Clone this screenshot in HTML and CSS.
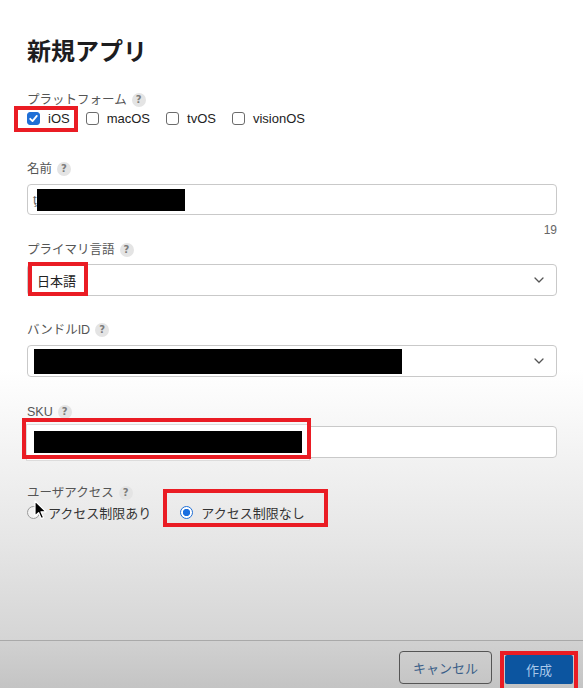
FILE: index.html
```html
<!DOCTYPE html>
<html>
<head>
    <title>新規アプリ</title>
    <link rel="stylesheet" href="styles.css">
</head>
<body>
    <div class="dialog">
        <div class="content">
            <h2 class="title">新規アプリ</h2>

            <!-- Platform -->
            <div class="label label-platform">プラットフォーム <span class="help">?</span></div>
            <div class="options">
                <span class="option"><span class="check checked"><svg viewBox="0 0 13 13" width="13" height="13"><path d="M3.2 6.8 L5.5 9.1 L9.8 3.9" fill="none" stroke="#fff" stroke-width="1.8" stroke-linecap="round" stroke-linejoin="round"/></svg></span>iOS</span>
                <span class="option"><span class="check"></span>macOS</span>
                <span class="option"><span class="check"></span>tvOS</span>
                <span class="option"><span class="check"></span>visionOS</span>
            </div>

            <!-- Name -->
            <div class="label label-name">名前 <span class="help">?</span></div>
            <div class="input input-name"><span class="ghost">ţ</span><span class="redact redact-name"></span></div>
            <div class="counter">19</div>

            <!-- Primary language -->
            <div class="label label-lang">プライマリ言語 <span class="help">?</span></div>
            <div class="input select select-lang">
                <span class="value">日本語</span>
                <svg class="chevron" viewBox="0 0 10 6" width="10" height="6"><path d="M1 1 L5 5 L9 1" fill="none" stroke="#555" stroke-width="1.3" stroke-linecap="round" stroke-linejoin="round"/></svg>
            </div>

            <!-- Bundle ID -->
            <div class="label label-bundle">バンドルID <span class="help">?</span></div>
            <div class="input select select-bundle">
                <span class="redact redact-bundle"></span>
                <svg class="chevron" viewBox="0 0 10 6" width="10" height="6"><path d="M1 1 L5 5 L9 1" fill="none" stroke="#555" stroke-width="1.3" stroke-linecap="round" stroke-linejoin="round"/></svg>
            </div>

            <!-- SKU -->
            <div class="label label-sku">SKU <span class="help">?</span></div>
            <div class="input input-sku"><span class="paste"><span class="redact redact-sku"></span></span></div>

            <!-- User access -->
            <div class="label label-access">ユーザアクセス <span class="help">?</span></div>
            <div class="options radios">
                <span class="option"><span class="radio"></span>アクセス制限あり</span>
                <span class="option option-gap"><span class="radio selected"></span>アクセス制限なし</span>
            </div>
        </div>

        <div class="footer">
            <button class="btn btn-cancel">キャンセル</button>
            <button class="btn btn-create">作成</button>
        </div>
    </div>

    <!-- annotation marks drawn over the screenshot -->
    <div class="mark mark-ios"></div>
    <div class="mark mark-lang"></div>
    <div class="mark mark-sku"></div>
    <div class="mark mark-open"></div>
    <div class="mark mark-create"></div>

    <svg class="cursor" viewBox="0 0 14 21" width="14" height="21"><path d="M1 1 L1 16 L4.6 12.6 L7.2 18.6 L9.6 17.6 L7 11.8 L12 11.8 Z" fill="#000" stroke="#fff" stroke-width="1.2" stroke-linejoin="round"/></svg>
</body>
</html>
```

FILE: styles.css
```css
body {
    margin: 0;
    width: 583px;
    height: 688px;
    overflow: hidden;
    position: relative;
    font-family: "Liberation Sans", "Noto Sans CJK JP", sans-serif;
    color: #222;
    background: linear-gradient(#ffffff 0, #ffffff 370px, #e6e6e6 540px, #d5d5d5 640px);
}
.dialog {
    height: 688px;
    display: flex;
    flex-direction: column;
}
.content {
    flex: 1;
    padding: 0 26px 0 27px;
}
.title {
    margin: 36px 0 0;
    font-size: 24px;
    line-height: 32px;
    font-weight: bold;
    color: #1d1d1f;
}
.label {
    display: flex;
    align-items: center;
    font-size: 12.5px;
    line-height: 18px;
    color: #555;
}
.help {
    display: inline-flex;
    align-items: center;
    justify-content: center;
    width: 14px;
    height: 14px;
    margin-left: 5px;
    border-radius: 50%;
    background-color: #e4e4e4;
    color: #7c7c7c;
    font-family: "DejaVu Sans", sans-serif;
    font-size: 10px;
    font-weight: bold;
    line-height: 14px;
}
.label-platform { margin-top: 23px; }
.label-name { margin-top: 33px; }
.label-lang { margin-top: 3px; }
.label-bundle { margin-top: 25px; }
.label-sku { margin-top: 26px; }
.label-access { margin-top: 26px; }

.options {
    display: flex;
    align-items: center;
    height: 18px;
    font-size: 13px;
    color: #222;
}
.option {
    display: flex;
    align-items: center;
    margin-right: 16px;
}
.check {
    width: 11px;
    height: 11px;
    margin-right: 8px;
    border: 1px solid #6b6b6b;
    border-radius: 3px;
    background: #fff;
    display: flex;
}
.check.checked {
    border-color: #1f6fd6;
    background: #1f6fd6;
}
.check svg {
    margin: -1px;
}
.radios {
    margin-top: 1px;
    color: #333;
}
.radio {
    width: 11px;
    height: 11px;
    margin-right: 8px;
    border: 1px solid #9a9a9a;
    border-radius: 50%;
    background: #f2f2f2;
}
.radio.selected {
    border-color: #1f6fd6;
    background: radial-gradient(circle, #1a6fe0 0, #1a6fe0 3.4px, #fff 3.9px);
}
.option-gap {
    margin-left: 13px;
}

.input {
    height: 29px;
    margin-top: 6px;
    border: 1px solid #c9c9c9;
    border-radius: 4px;
    background: #fff;
    display: flex;
    align-items: center;
    position: relative;
}
.input-name { margin-top: 6px; }
.select-lang { margin-top: 5px; height: 30px; }
.select-bundle { margin-top: 6px; height: 30px; }
.input-sku { margin-top: 5px; height: 30px; }
.select {
    justify-content: space-between;
    padding-right: 12px;
}
.value {
    padding-left: 9px;
    font-size: 13px;
    color: #222;
}
.chevron {
    margin-left: auto;
}
.ghost {
    padding-left: 5px;
    font-size: 13px;
    color: #666;
}
.redact {
    display: block;
    background: #000;
}
.redact-name {
    width: 148px;
    height: 22px;
}
.redact-bundle {
    width: 368px;
    height: 25px;
    margin-left: 6px;
}
.paste {
    display: flex;
    align-items: center;
    justify-content: center;
    width: 282px;
    height: 35px;
    margin-left: -2px;
    border: 1px solid #dcdcdc;
    background: #fff;
}
.redact-sku {
    width: 268px;
    height: 22px;
}
.counter {
    margin-top: 7px;
    font-size: 12px;
    line-height: 16px;
    text-align: right;
    color: #666;
}

.footer {
    height: 47px;
    border-top: 1px solid #a9a9a9;
    background: linear-gradient(#d1d1d1, #c4c4c4);
    display: flex;
    justify-content: flex-end;
    align-items: flex-start;
    padding-right: 10px;
}
.btn {
    height: 33px;
    margin-top: 10px;
    border-radius: 4px;
    font-family: "Liberation Sans", "Noto Sans CJK JP", sans-serif;
    font-size: 13px;
    cursor: pointer;
}
.btn-cancel {
    width: 93px;
    border: 1px solid #555;
    background: transparent;
    color: #3b5f88;
    margin-right: 13px;
}
.btn-create {
    width: 68px;
    height: 29px;
    margin-top: 14px;
    border: none;
    border-radius: 2px;
    background: #0c55a0;
    color: #a9c8ea;
}

.mark {
    position: absolute;
    border: 4px solid #ea1c24;
}
.mark-ios { left: 14px; top: 106px; width: 56px; height: 18px; }
.mark-lang { left: 28px; top: 262px; width: 52px; height: 26px; }
.mark-sku { left: 22px; top: 418px; width: 281px; height: 33px; }
.mark-open { left: 163px; top: 489px; width: 157px; height: 30px; }
.mark-create { left: 500px; top: 651px; width: 70px; height: 33px; }
.cursor {
    position: absolute;
    left: 34px;
    top: 500px;
}
```
